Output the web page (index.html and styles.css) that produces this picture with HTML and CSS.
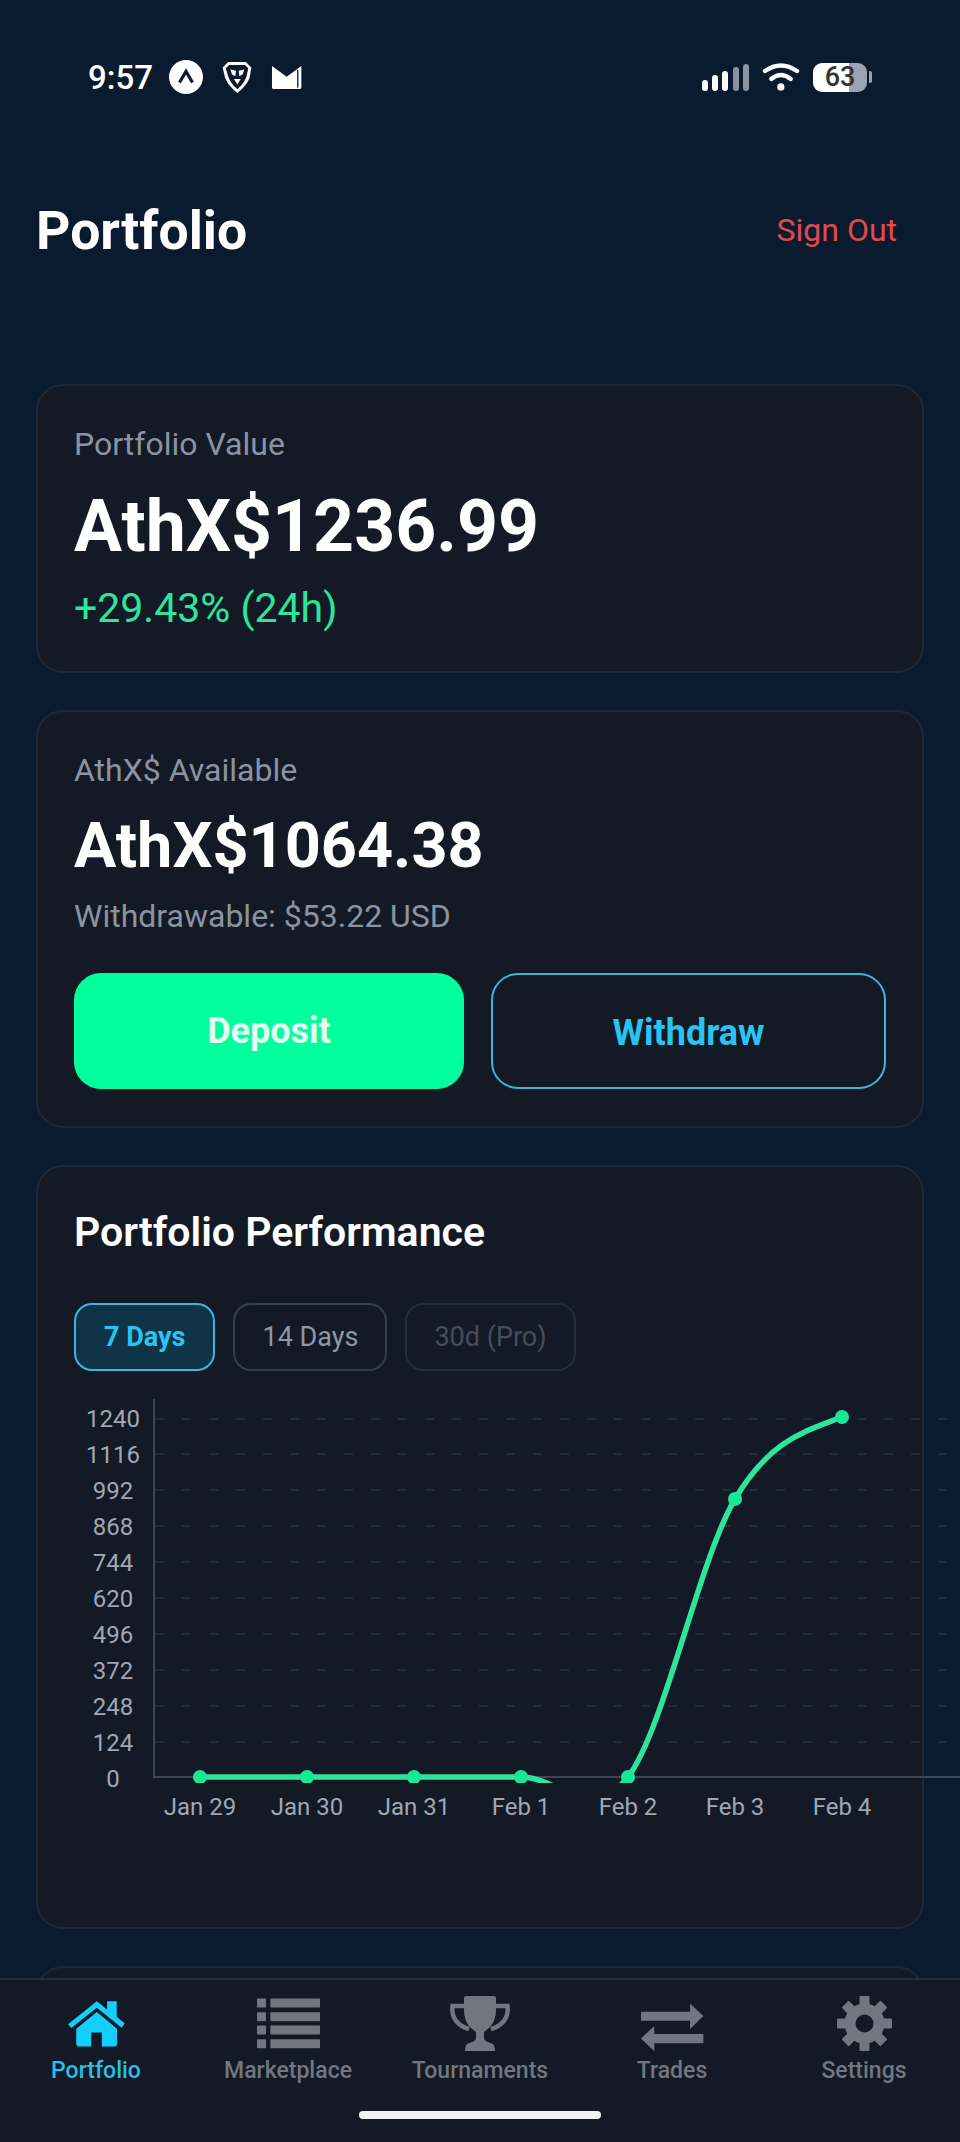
FILE: index.html
```html
<!DOCTYPE html>
<html lang="en">
<head>
    <meta charset="UTF-8">
    <meta name="viewport" content="width=device-width, initial-scale=1.0">
    <title>Portfolio</title>
    <link rel="stylesheet" href="styles.css">
</head>
<body>
    <div class="app">
        <div class="status-bar">
            <div class="status-group">
                <span class="time">9:57</span>
                <svg class="icon-expo" viewBox="0 0 34 34">
                    <circle cx="17" cy="17" r="17" fill="#fff"/>
                    <path d="M10.5 22.5 L17 11.5 L23.5 22.5" fill="none" stroke="#0a1a2f" stroke-width="3.2"/>
                </svg>
                <svg class="icon-brave" viewBox="455 40 88 95">
                    <path d="M473 42 H525 L541 58 L536 88 Q528 110 500 133 Q472 110 464 88 L457 58 Z" fill="#fff"/>
                    <path d="M476 51 H522 L532 60 L527 84 Q522 100 512 110 L500 122 L488 110 Q478 100 473 84 L466 60 Z" fill="#0a1a2f"/>
                    <path d="M480 64 L496 68 L494 84 L484 78 Z M520 64 L504 68 L506 84 L516 78 Z" fill="#fff"/>
                    <path d="M490 92 H510 L500 108 Z" fill="#fff"/>
                </svg>
                <svg class="icon-mail" viewBox="810 195 95 75">
                    <path d="M813 197 L858 230 L903 197 V262 Q903 268 897 268 H819 Q813 268 813 262 Z" fill="#fff"/>
                    <path d="M892 209 V263" stroke="#0a1a2f" stroke-width="4"/>
                </svg>
            </div>
            <div class="status-group status-right">
                <svg class="icon-signal" viewBox="0 0 47 27">
                    <rect x="0" y="16" width="6" height="11" rx="3" fill="#fff"/>
                    <rect x="10" y="11" width="6" height="16" rx="3" fill="#fff"/>
                    <rect x="20" y="7" width="6" height="20" rx="3" fill="#fff"/>
                    <rect x="31" y="3" width="6" height="24" rx="3" fill="#8b93a0"/>
                    <rect x="41" y="0" width="6" height="27" rx="3" fill="#8b93a0"/>
                </svg>
                <svg class="icon-wifi" viewBox="365 95 115 90">
                    <path d="M374 122 Q422 88 471 122" fill="none" stroke="#fff" stroke-width="13" stroke-linecap="round"/>
                    <path d="M393 146 Q422 122 452 146" fill="none" stroke="#fff" stroke-width="13" stroke-linecap="round"/>
                    <circle cx="422" cy="170" r="11" fill="#fff"/>
                </svg>
                <div class="battery">
                    <div class="battery-body">63</div>
                    <div class="battery-cap"></div>
                </div>
            </div>
        </div>

        <div class="content">
            <div class="header">
                <h1 class="page-title">Portfolio</h1>
                <span class="sign-out">Sign Out</span>
            </div>

            <div class="card">
                <div class="card-label">Portfolio Value</div>
                <div class="value-large">AthX$1236.99</div>
                <div class="change">+29.43% (24h)</div>
            </div>

            <div class="card">
                <div class="card-label">AthX$ Available</div>
                <div class="value-medium">AthX$1064.38</div>
                <div class="card-label withdrawable">Withdrawable: $53.22 USD</div>
                <div class="actions">
                    <button class="btn btn-deposit">Deposit</button>
                    <button class="btn btn-withdraw">Withdraw</button>
                </div>
            </div>

            <div class="card card-chart">
                <h2 class="card-title">Portfolio Performance</h2>
                <div class="pills">
                    <span class="pill pill-active">7 Days</span>
                    <span class="pill">14 Days</span>
                    <span class="pill pill-disabled">30d (Pro)</span>
                </div>
                <svg class="chart" viewBox="74 1390 886 440">
                    <defs>
                        <clipPath id="plot-clip"><rect x="74" y="1390" width="886" height="392"/></clipPath>
                    </defs>
                    <g class="grid">
                        <line x1="155" x2="960" y1="1418" y2="1418"/>
                        <line x1="155" x2="960" y1="1453" y2="1453"/>
                        <line x1="155" x2="960" y1="1489" y2="1489"/>
                        <line x1="155" x2="960" y1="1525" y2="1525"/>
                        <line x1="155" x2="960" y1="1561" y2="1561"/>
                        <line x1="155" x2="960" y1="1597" y2="1597"/>
                        <line x1="155" x2="960" y1="1633" y2="1633"/>
                        <line x1="155" x2="960" y1="1669" y2="1669"/>
                        <line x1="155" x2="960" y1="1705" y2="1705"/>
                        <line x1="155" x2="960" y1="1741" y2="1741"/>
                    </g>
                    <path class="axis" d="M154 1398 V1776 H960"/>
                    <g class="y-labels">
                        <text x="113" y="1426">1240</text>
                        <text x="113" y="1462">1116</text>
                        <text x="113" y="1498">992</text>
                        <text x="113" y="1534">868</text>
                        <text x="113" y="1570">744</text>
                        <text x="113" y="1606">620</text>
                        <text x="113" y="1642">496</text>
                        <text x="113" y="1678">372</text>
                        <text x="113" y="1714">248</text>
                        <text x="113" y="1750">124</text>
                        <text x="113" y="1786">0</text>
                    </g>
                    <g class="x-labels">
                        <text x="200" y="1814">Jan 29</text>
                        <text x="307" y="1814">Jan 30</text>
                        <text x="414" y="1814">Jan 31</text>
                        <text x="521" y="1814">Feb 1</text>
                        <text x="628" y="1814">Feb 2</text>
                        <text x="735" y="1814">Feb 3</text>
                        <text x="842" y="1814">Feb 4</text>
                    </g>
                    <g clip-path="url(#plot-clip)">
                        <path class="line" d="M200 1776 H521 C556.7 1776 592.3 1822 628 1776 C663.7 1729.7 699.3 1558 735 1498 C770.7 1438 806 1430 842 1416"/>
                        <g class="dots">
                            <circle cx="200" cy="1776" r="7"/>
                            <circle cx="307" cy="1776" r="7"/>
                            <circle cx="414" cy="1776" r="7"/>
                            <circle cx="521" cy="1776" r="7"/>
                            <circle cx="628" cy="1776" r="7"/>
                            <circle cx="735" cy="1498" r="7"/>
                            <circle cx="842" cy="1416" r="7"/>
                        </g>
                    </g>
                </svg>
            </div>

            <div class="card card-next"></div>
        </div>

        <div class="tab-bar">
            <div class="tab tab-active">
                <svg class="tab-icon" width="57" height="48" viewBox="200 300 172 145">
                    <path d="M200 375 L287 305 L318 330 V305 H347 V352 L371 372 L362 385 L287 325 L210 386 Z"/>
                    <path d="M225 388 L287 338 L348 388 V435 Q348 442 341 442 H302 V400 H270 V442 H232 Q225 442 225 435 Z"/>
                </svg>
                <span class="tab-label">Portfolio</span>
            </div>
            <div class="tab">
                <svg class="tab-icon" width="63" height="50" viewBox="768 292 189 150">
                    <rect x="768" y="292" width="27" height="27" rx="2"/>
                    <rect x="808" y="292" width="149" height="27" rx="2"/>
                    <rect x="768" y="333" width="27" height="27" rx="2"/>
                    <rect x="808" y="333" width="149" height="27" rx="2"/>
                    <rect x="768" y="373" width="27" height="27" rx="2"/>
                    <rect x="808" y="373" width="149" height="27" rx="2"/>
                    <rect x="768" y="414" width="27" height="27" rx="2"/>
                    <rect x="808" y="414" width="149" height="27" rx="2"/>
                </svg>
                <span class="tab-label">Marketplace</span>
            </div>
            <div class="tab">
                <svg class="tab-icon" width="60" height="55" viewBox="0 0 60 55">
                    <path d="M14 2 Q14 0 16 0 H44 Q46 0 46 2 V14 C46 28 38 33 34 36 V42 C34 45 38 46 43 48 Q45 50 45 55 H15 Q15 50 17 48 C22 46 26 45 26 42 V36 C22 33 14 28 14 14 Z"/>
                    <path class="tab-stroke" d="M15 10 H2.5 C1 22 8 30 19 33"/>
                    <path class="tab-stroke" d="M45 10 H57.5 C59 22 52 30 41 33"/>
                </svg>
                <span class="tab-label">Tournaments</span>
            </div>
            <div class="tab">
                <svg class="tab-icon" width="63" height="55" viewBox="480 286 190 165">
                    <path d="M480 333 H628 V308 L668 346 L628 385 V360 H480 Z"/>
                    <path d="M668 400 H520 V376 L480 414 L520 452 V428 H668 Z"/>
                </svg>
                <span class="tab-label">Trades</span>
            </div>
            <div class="tab">
                <svg class="tab-icon" width="55" height="55" viewBox="-27.5 -27.5 55 55">
                    <circle class="tab-stroke gear-ring" r="14.5"/>
                    <rect x="-5" y="-27.5" width="10" height="11" rx="1"/>
                    <rect x="-5" y="-27.5" width="10" height="11" rx="1" transform="rotate(45)"/>
                    <rect x="-5" y="-27.5" width="10" height="11" rx="1" transform="rotate(90)"/>
                    <rect x="-5" y="-27.5" width="10" height="11" rx="1" transform="rotate(135)"/>
                    <rect x="-5" y="-27.5" width="10" height="11" rx="1" transform="rotate(180)"/>
                    <rect x="-5" y="-27.5" width="10" height="11" rx="1" transform="rotate(225)"/>
                    <rect x="-5" y="-27.5" width="10" height="11" rx="1" transform="rotate(270)"/>
                    <rect x="-5" y="-27.5" width="10" height="11" rx="1" transform="rotate(315)"/>
                </svg>
                <span class="tab-label">Settings</span>
            </div>
            <div class="home-indicator"></div>
        </div>
    </div>
</body>
</html>
```

FILE: styles.css
```css
body {
    font-family: Roboto, "Liberation Sans", sans-serif;
    background-color: #0a1a2f;
    margin: 0;
    overflow: hidden;
}

.app {
    display: flex;
    flex-direction: column;
    height: 2142px;
    overflow: hidden;
}

/* status bar */
.status-bar {
    display: flex;
    justify-content: space-between;
    align-items: center;
    height: 154px;
    padding: 0 88px;
    flex-shrink: 0;
}

.status-group {
    display: flex;
    align-items: center;
}

.time {
    color: #fff;
    font-size: 33px;
    font-weight: 500;
    width: 64px;
    margin-right: 17px;
}

.icon-expo {
    width: 34px;
    height: 34px;
    margin-right: 19px;
}

.icon-brave {
    width: 30px;
    height: 33px;
    margin-right: 19px;
}

.icon-mail {
    width: 31px;
    height: 25px;
}

.icon-signal {
    width: 47px;
    height: 27px;
    margin-right: 13px;
}

.icon-wifi {
    width: 38px;
    height: 30px;
    margin-right: 13px;
}

.battery {
    display: flex;
    align-items: center;
}

.battery-body {
    width: 54px;
    height: 29px;
    border-radius: 9px;
    background: linear-gradient(to right, #fff 67%, #9aa3af 67%);
    color: #333;
    font-size: 27px;
    font-weight: 500;
    line-height: 29px;
    text-align: center;
}

.battery-cap {
    width: 3px;
    height: 12px;
    margin-left: 2px;
    border-radius: 0 2px 2px 0;
    background-color: #9aa3af;
}

/* scrolling content */
.content {
    flex: 1;
    min-height: 0;
    overflow: hidden;
    padding: 0 36px;
}

.header {
    display: flex;
    justify-content: space-between;
    align-items: center;
    height: 152px;
    margin-bottom: 78px;
}

.page-title {
    margin: 0;
    color: #fff;
    font-size: 53.5px;
    font-weight: 700;
}

.sign-out {
    margin-right: 27px;
    color: #e04a4c;
    font-size: 32px;
}

.card {
    background-color: #131a25;
    border: 2px solid #1e2938;
    border-radius: 27px;
    padding: 37px 36px;
    margin-bottom: 37px;
}

.card-label {
    color: #8b93a1;
    font-size: 32px;
    line-height: 42px;
}

.value-large {
    margin-top: 20px;
    color: #fff;
    font-size: 71.5px;
    font-weight: 700;
    line-height: 84px;
}

.change {
    margin-top: 16px;
    margin-bottom: 3px;
    color: #2ee59d;
    font-size: 41px;
    line-height: 46px;
}

.value-medium {
    margin-top: 18px;
    color: #fff;
    font-size: 63px;
    font-weight: 700;
    line-height: 74px;
}

.withdrawable {
    margin-top: 12px;
}

.actions {
    display: flex;
    gap: 27px;
    margin-top: 36px;
}

.btn {
    height: 116px;
    border-radius: 27px;
    font-family: inherit;
    font-size: 36px;
    font-weight: 700;
    cursor: pointer;
}

.btn-deposit {
    width: 390px;
    border: none;
    background-color: #00ff9d;
    color: #e6fff5;
}

.btn-withdraw {
    flex: 1;
    padding-top: 4px;
    border: 2px solid #3fb4dc;
    background-color: transparent;
    color: #29c5f0;
}

/* chart card */
.card-chart {
    height: 686px;
}

.card-title {
    margin: 0;
    color: #fff;
    font-size: 41px;
    font-weight: 600;
    line-height: 56px;
}

.pills {
    display: flex;
    gap: 18px;
    margin-top: 43px;
}

.pill {
    display: flex;
    align-items: center;
    justify-content: center;
    height: 68px;
    box-sizing: border-box;
    padding: 0 27px;
    border: 2px solid #363e4b;
    border-radius: 18px;
    color: #8f97a4;
    font-size: 27px;
}

.pill-active {
    padding: 0 28px;
    border-color: #3fb4dc;
    background-color: #0f3347;
    color: #29c5f0;
    font-weight: 700;
}

.pill-disabled {
    border-color: #252d3a;
    color: #454d5b;
}

.chart {
    display: block;
    width: 886px;
    height: 440px;
    margin-top: 20px;
    overflow: visible;
}

.grid line {
    stroke: #2a3341;
    stroke-width: 1.5;
    stroke-dasharray: 9 18;
}

.axis {
    fill: none;
    stroke: #3d4553;
    stroke-width: 2;
}

.y-labels text {
    fill: #a0a7b3;
    font-size: 24px;
    text-anchor: middle;
}

.x-labels text {
    fill: #a0a7b3;
    font-size: 24px;
    text-anchor: middle;
}

.line {
    fill: none;
    stroke: #2ee59d;
    stroke-width: 5.5;
}

.dots circle {
    fill: #16e896;
}

.card-next {
    height: 200px;
    margin-bottom: 0;
}

/* bottom tabs */
.tab-bar {
    position: relative;
    display: flex;
    height: 162px;
    flex-shrink: 0;
    background-color: #131a25;
    border-top: 2px solid #252d3a;
}

.tab {
    flex: 1;
    display: flex;
    flex-direction: column;
    align-items: center;
    height: 94px;
    padding-top: 16px;
}

.tab-icon {
    height: 55px;
    fill: #71767f;
}

.tab-stroke {
    fill: none;
    stroke: #71767f;
    stroke-width: 4.5;
}

.gear-ring {
    stroke-width: 11;
}

.tab-label {
    margin-top: 5px;
    color: #71767f;
    font-size: 23px;
    font-weight: 500;
    line-height: 30px;
}

.tab-active .tab-icon {
    fill: #12cfff;
}

.tab-active .tab-label {
    color: #29bfe8;
}

.home-indicator {
    position: absolute;
    left: 359px;
    bottom: 23px;
    width: 242px;
    height: 8px;
    border-radius: 4px;
    background-color: #eef1f5;
}
```
